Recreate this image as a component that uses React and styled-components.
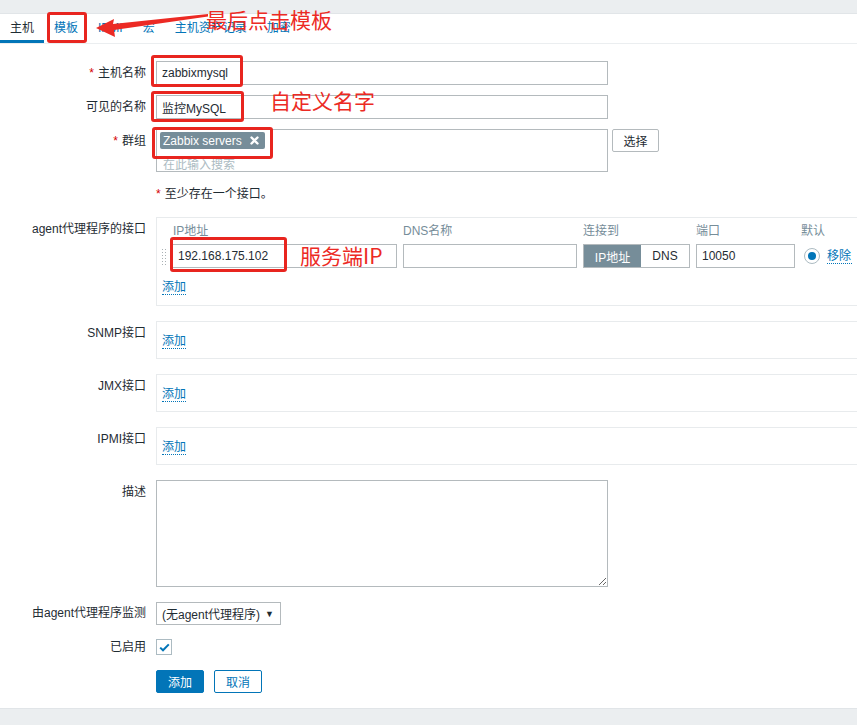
import React from 'react';
import styled, { createGlobalStyle } from 'styled-components';

const Global = createGlobalStyle`
  html, body { margin: 0; padding: 0; background: #fff; }
  body {
    font-family: "Liberation Sans", Arial, "Noto Sans CJK SC", sans-serif;
    font-size: 12px;
    color: #1f2c33;
  }
  * { box-sizing: border-box; }
`;

const Page = styled.div`
  position: relative;
  width: 857px;
  height: 725px;
  overflow: hidden;
  display: flex;
  flex-direction: column;
  background: #fff;
`;

const TopBand = styled.div`
  height: 14px;
  background: #ebeef0;
  border-bottom: 1px solid #e1e5e8;
  flex-shrink: 0;
`;

const TabBar = styled.ul`
  list-style: none;
  margin: 0;
  padding: 0;
  display: flex;
  height: 30px;
  border-bottom: 1px solid #ebeef0;
  flex-shrink: 0;
`;

const Tab = styled.li`
  padding: 0 10px;
  line-height: 28px;
  color: ${p => (p.$active ? '#1f2c33' : '#0275b8')};
  border-bottom: 3px solid ${p => (p.$active ? '#0275b8' : 'transparent')};
  white-space: nowrap;
`;

const Form = styled.div`
  flex: 1;
  padding-top: 17px;
  display: flex;
  flex-direction: column;
`;

const Row = styled.div`
  display: grid;
  grid-template-columns: 146px 1fr;
  column-gap: 10px;
  align-items: start;
  margin-bottom: ${p => p.$gap ?? 15}px;
`;

const Label = styled.div`
  text-align: right;
  line-height: ${p => p.$lh ?? 24}px;
  white-space: nowrap;
`;

const Star = styled.span`
  color: #d40000;
  margin-right: 4px;
`;

const Field = styled.div`
  display: flex;
  align-items: flex-start;
  gap: 4px;
`;

const TextInput = styled.input`
  width: ${p => p.$w}px;
  height: 24px;
  border: 1px solid #b4babd;
  padding: 0 5px;
  font: inherit;
  color: #1f2c33;
  background: #fff;
  outline: none;
`;

const MultiSelect = styled.div`
  width: 452px;
  height: 43px;
  border: 1px solid #b4babd;
  padding: 2px 3px;
`;

const TagChip = styled.span`
  display: inline-flex;
  align-items: center;
  gap: 8px;
  height: 17px;
  padding: 0 6px 0 3px;
  background: #768d99;
  color: #fff;
  border-radius: 2px;
`;

const Placeholder = styled.div`
  color: #acbbc2;
  margin-top: 6px;
  padding-left: 3px;
`;

const PlainButton = styled.button`
  height: 23px;
  width: 47px;
  padding: 0;
  border: 1px solid #b4babd;
  background: #fff;
  font: inherit;
  color: #1f2c33;
  border-radius: 2px;
`;

const Note = styled.div`
  line-height: 24px;
`;

const InterfaceBox = styled.div`
  border: 1px solid #e8ebed;
  border-right: none;
  min-height: ${p => p.$h}px;
  padding: ${p => p.$pad};
`;

const IfGrid = styled.div`
  display: grid;
  grid-template-columns: 4px 225px 174px 107px 99px 20px auto;
  column-gap: 6px;
  align-items: center;
`;

const IfHead = styled.div`
  color: #768d99;
  line-height: 14px;
  padding-left: ${p => p.$pl ?? 0}px;
  margin-bottom: 6px;
  white-space: nowrap;
`;

const DragHandle = styled.span`
  width: 6px;
  height: 17px;
  margin-left: -1px;
  background-image: radial-gradient(circle, #a9b0b4 0.9px, transparent 1px);
  background-size: 3px 3px;
`;

const Segmented = styled.div`
  display: flex;
  height: 24px;
  border: 1px solid #b4babd;
`;

const Segment = styled.span`
  width: ${p => p.$w}px;
  display: flex;
  align-items: center;
  justify-content: center;
  background: ${p => (p.$on ? '#768d99' : '#fff')};
  color: ${p => (p.$on ? '#fff' : '#1f2c33')};
`;

const Radio = styled.span`
  width: 16px;
  height: 16px;
  border-radius: 50%;
  border: 1px solid #acbbc2;
  display: flex;
  align-items: center;
  justify-content: center;
  margin-left: 3px;
  &::after {
    content: '';
    width: 8px;
    height: 8px;
    border-radius: 50%;
    background: #0275b8;
  }
`;

const DotLink = styled.span`
  color: #0275b8;
  border-bottom: 1px dotted #0275b8;
  line-height: 14px;
  display: inline-block;
`;

const AddLine = styled.div`
  margin-top: ${p => p.$mt}px;
  padding-left: ${p => p.$pl ?? 0}px;
`;

const TextArea = styled.textarea`
  width: 452px;
  height: 107px;
  border: 1px solid #b4babd;
  font: inherit;
  resize: both;
  outline: none;
  display: block;
`;

const SelectBox = styled.div`
  width: 125px;
  height: 23px;
  border: 1px solid #b4babd;
  display: flex;
  align-items: center;
  justify-content: space-between;
  padding: 0 6px 0 5px;
  font-size: 12px;
  white-space: nowrap;
`;

const Caret = styled.span`
  font-size: 9px;
`;

const CheckBox = styled.span`
  width: 16px;
  height: 16px;
  border: 1px solid #acbbc2;
  display: flex;
  align-items: center;
  justify-content: center;
  margin-top: 4px;
`;

const Actions = styled.div`
  display: flex;
  gap: 10px;
`;

const ActionButton = styled.button`
  width: 48px;
  height: 23px;
  padding: 0;
  font: inherit;
  border-radius: 2px;
  border: 1px solid #0275b8;
  background: ${p => (p.$primary ? '#0275b8' : '#fff')};
  color: ${p => (p.$primary ? '#fff' : '#0275b8')};
`;

const BottomBand = styled.div`
  height: 17px;
  background: #ebeef0;
  border-top: 1px solid #e1e5e8;
  flex-shrink: 0;
`;

/* annotations painted over the screenshot */
const RedBox = styled.div`
  position: absolute;
  left: ${p => p.$x}px;
  top: ${p => p.$y}px;
  width: ${p => p.$w}px;
  height: ${p => p.$h}px;
  border: 3px solid #e8251f;
  border-radius: 3px;
  pointer-events: none;
`;

const RedText = styled.div`
  position: absolute;
  left: ${p => p.$x}px;
  top: ${p => p.$y}px;
  color: #ec2a24;
  font-family: "Noto Sans CJK SC", "Liberation Sans", sans-serif;
  font-size: 21px;
  line-height: 24px;
  white-space: nowrap;
`;

const ArrowSvg = styled.svg`
  position: absolute;
  left: 94px;
  top: 10px;
`;

const XIcon = () => (
  <svg width="9" height="9" viewBox="0 0 9 9">
    <path d="M1.5 1.5 L7.5 7.5 M7.5 1.5 L1.5 7.5" stroke="#fff" strokeWidth="2.4" strokeLinecap="round" />
  </svg>
);

const Check = () => (
  <svg width="11" height="9" viewBox="0 0 11 9">
    <path d="M1.2 4.6 L4 7.3 L9.8 1.4" fill="none" stroke="#0275b8" strokeWidth="2" />
  </svg>
);

const tabs = ['主机', '模板', 'IPMI', '宏', '主机资产记录', '加密'];

const EmptyInterface = ({ label }) => (
  <Row>
    <Label>{label}</Label>
    <InterfaceBox $h={38} $pad="12px 5px 0">
      <DotLink>添加</DotLink>
    </InterfaceBox>
  </Row>
);

export default function App() {
  return (
    <>
      <Global />
      <Page>
        <TopBand />
        <TabBar>
          {tabs.map((t, i) => (
            <Tab key={t} $active={i === 0}>{t}</Tab>
          ))}
        </TabBar>

        <Form>
          <Row $gap={10}>
            <Label><Star>*</Star>主机名称</Label>
            <TextInput $w={452} defaultValue="zabbixmysql" readOnly />
          </Row>
          <Row $gap={10}>
            <Label>可见的名称</Label>
            <TextInput $w={452} defaultValue="监控MySQL" readOnly />
          </Row>
          <Row $gap={10}>
            <Label><Star>*</Star>群组</Label>
            <Field>
              <MultiSelect>
                <TagChip>Zabbix servers <XIcon /></TagChip>
                <Placeholder>在此输入搜索</Placeholder>
              </MultiSelect>
              <PlainButton>选择</PlainButton>
            </Field>
          </Row>
          <Row $gap={11}>
            <span />
            <Note><Star>*</Star>至少存在一个接口。</Note>
          </Row>

          <Row>
            <Label>agent代理程序的接口</Label>
            <InterfaceBox $h={89} $pad="6px 5px 0">
              <IfGrid>
                <span />
                <IfHead $pl={1}>IP地址</IfHead>
                <IfHead>DNS名称</IfHead>
                <IfHead>连接到</IfHead>
                <IfHead>端口</IfHead>
                <IfHead>默认</IfHead>
                <span />
                <DragHandle />
                <TextInput $w={225} defaultValue="192.168.175.102" readOnly />
                <TextInput $w={174} defaultValue="" readOnly />
                <Segmented>
                  <Segment $w={57} $on>IP地址</Segment>
                  <Segment $w={48}>DNS</Segment>
                </Segmented>
                <TextInput $w={99} defaultValue="10050" readOnly />
                <Radio />
                <DotLink>移除</DotLink>
              </IfGrid>
              <AddLine $mt={12}>
                <DotLink>添加</DotLink>
              </AddLine>
            </InterfaceBox>
          </Row>

          <EmptyInterface label="SNMP接口" />
          <EmptyInterface label="JMX接口" />
          <EmptyInterface label="IPMI接口" />

          <Row>
            <Label>描述</Label>
            <TextArea readOnly />
          </Row>
          <Row $gap={10}>
            <Label $lh={23}>由agent代理程序监测</Label>
            <SelectBox>
              <span>(无agent代理程序)</span>
              <Caret>▼</Caret>
            </SelectBox>
          </Row>
          <Row $gap={11}>
            <Label>已启用</Label>
            <CheckBox><Check /></CheckBox>
          </Row>
          <Row>
            <span />
            <Actions>
              <ActionButton $primary>添加</ActionButton>
              <ActionButton>取消</ActionButton>
            </Actions>
          </Row>
        </Form>

        <BottomBand />

        <RedBox $x={47} $y={12} $w={40} $h={31} />
        <RedBox $x={151} $y={55} $w={92} $h={32} />
        <RedBox $x={151} $y={91} $w={93} $h={31} />
        <RedBox $x={152} $y={127} $w={121} $h={32} />
        <RedBox $x={170} $y={237} $w={117} $h={35} />

        <ArrowSvg width="120" height="30" viewBox="0 0 120 30">
          <polygon points="2,18 20,9 19,14 114,4 114,6.5 20,20 21,27" fill="#ec2a24" />
        </ArrowSvg>
        <RedText $x={206} $y={7}>最后点击模板</RedText>
        <RedText $x={270} $y={88}>自定义名字</RedText>
        <RedText $x={300} $y={243}>服务端IP</RedText>
      </Page>
    </>
  );
}
